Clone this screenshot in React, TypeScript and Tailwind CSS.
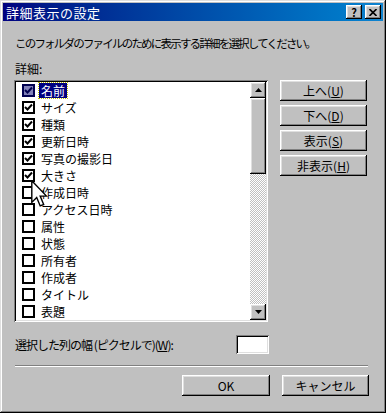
import React from "react";

const FONT = "font-['Noto_Sans_CJK_JP','Noto_Sans',sans-serif]";
const RAISED =
  "bg-[#c0c0c0] shadow-[inset_-1px_-1px_#000000,inset_1px_1px_#ffffff,inset_-2px_-2px_#808080,inset_2px_2px_#dfdfdf]";
const SUNKEN =
  "shadow-[inset_1px_1px_#808080,inset_-1px_-1px_#ffffff,inset_2px_2px_#000000,inset_-2px_-2px_#dfdfdf]";

const ITEMS = [
  { label: "名前", checked: true },
  { label: "サイズ", checked: true },
  { label: "種類", checked: true },
  { label: "更新日時", checked: true },
  { label: "写真の撮影日", checked: true },
  { label: "大きさ", checked: true },
  { label: "作成日時", checked: false },
  { label: "アクセス日時", checked: false },
  { label: "属性", checked: false },
  { label: "状態", checked: false },
  { label: "所有者", checked: false },
  { label: "作成者", checked: false },
  { label: "タイトル", checked: false },
  { label: "表題", checked: false },
];

function Check({ color }: { color: string }) {
  return (
    <svg width="9" height="9" viewBox="0 0 9 9" className="block">
      <path d="M1 4 L3.5 6.5 L8 1.5" fill="none" stroke={color} strokeWidth="2" />
    </svg>
  );
}

function Btn({ children, className = "" }: { children: React.ReactNode; className?: string }) {
  return (
    <div
      className={`${RAISED} h-[21px] w-[87px] flex items-center justify-center text-[12px] leading-none text-black ${className}`}
    >
      {children}
    </div>
  );
}

function Arrow({ up }: { up?: boolean }) {
  return (
    <div className={`${RAISED} w-[16px] h-[16px] flex items-center justify-center`}>
      <svg width="7" height="4" viewBox="0 0 7 4" className="block">
        <path d={up ? "M3.5 0 L7 4 L0 4 Z" : "M0 0 L7 0 L3.5 4 Z"} fill="#000" />
      </svg>
    </div>
  );
}

export default function App() {
  return (
    <div
      className={`${FONT} relative w-[386px] h-[413px] bg-[#c0c0c0] p-[3px] flex flex-col shadow-[inset_-1px_-1px_#000000,inset_1px_1px_#dfdfdf,inset_-2px_-2px_#808080,inset_2px_2px_#ffffff]`}
    >
      {/* Title bar */}
      <div className="h-[18px] flex items-center bg-linear-to-r from-[#000080] to-[#1084d0] pl-[3px] pr-[2px]">
        <span className="text-white text-[13px] leading-none tracking-[0.5px]">詳細表示の設定</span>
        <div className="ml-auto flex gap-[3px]">
          <div className={`${RAISED} w-[16px] h-[14px] flex items-center justify-center text-[11px] font-bold leading-none`}>
            ?
          </div>
          <div className={`${RAISED} w-[16px] h-[14px] flex items-center justify-center`}>
            <svg width="8" height="7" viewBox="0 0 8 7" className="block">
              <path d="M0.5 0 L7.5 7 M7.5 0 L0.5 7" stroke="#000" strokeWidth="1.6" />
            </svg>
          </div>
        </div>
      </div>

      {/* Body */}
      <div className="flex flex-col pl-[11px] pr-[14px] text-black">
        <div className="mt-[15px] text-[11.5px] leading-[14px] tracking-[-1.8px] pl-[1px] whitespace-nowrap">
          このフォルダのファイルのために表示する詳細を選択してください。
        </div>
        <div className="mt-[12px] text-[12px] leading-[14px] pl-[1px]">詳細:</div>

        <div className="mt-[4px] flex">
          {/* List box */}
          <div className={`${SUNKEN} w-[254px] h-[242px] bg-white p-[2px] flex`}>
            <div className="flex-1 flex flex-col">
              {ITEMS.map((it, i) => {
                const sel = i === 0;
                return (
                  <div key={it.label} className="h-[17px] flex items-center pl-[6px]">
                    <div
                      className={`w-[13px] h-[13px] border-2 flex items-center justify-center ${
                        sel ? "border-[#000050] bg-[#8080b8]" : "border-black bg-white"
                      }`}
                    >
                      {it.checked && <Check color={sel ? "#000050" : "#000"} />}
                    </div>
                    <span
                      className={`ml-[4px] h-[15px] px-[2px] flex items-center text-[12px] leading-none ${
                        sel ? "bg-[#000080] text-white outline outline-1 outline-dotted outline-[#c0c000]" : ""
                      }`}
                    >
                      {it.label}
                    </span>
                  </div>
                );
              })}
            </div>
            {/* Scrollbar */}
            <div className="w-[16px] flex flex-col">
              <Arrow up />
              <div className={`${RAISED} h-[76px]`} />
              <div className="flex-1 bg-[repeating-conic-gradient(#c0c0c0_0_25%,#ffffff_0_50%)] bg-size-[2px_2px]" />
              <Arrow />
            </div>
          </div>

          {/* Buttons */}
          <div className="ml-[12px] flex flex-col gap-[4px]">
            <Btn>
              上へ(<u>U</u>)
            </Btn>
            <Btn>
              下へ(<u>D</u>)
            </Btn>
            <Btn>
              表示(<u>S</u>)
            </Btn>
            <Btn>
              非表示(<u>H</u>)
            </Btn>
          </div>
        </div>

        <div className="mt-[13px] flex items-center">
          <span className="pl-[1px] text-[12px] leading-none tracking-[-1px] whitespace-nowrap">
            選択した列の幅 (ピクセルで)(<u>W</u>):
          </span>
          <div className={`${SUNKEN} ml-auto mr-[100px] w-[33px] h-[19px] bg-white`} />
        </div>

        <div className="mt-[11px] ml-[1px] mr-[1px] h-[2px] border-t border-t-[#808080] border-b border-b-white" />

        <div className="mt-[8px] flex justify-end gap-[12px]">
          <Btn className="w-[88px] shadow-[inset_-1px_-1px_#000000,inset_1px_1px_#000000,inset_-2px_-2px_#000000,inset_2px_2px_#ffffff,inset_-3px_-3px_#808080,inset_3px_3px_#dfdfdf]">
            OK
          </Btn>
          <Btn>キャンセル</Btn>
        </div>
      </div>

      {/* Mouse cursor */}
      <svg
        className="absolute left-[31px] top-[180px]"
        width="17"
        height="28"
        viewBox="0 0 12 20"
      >
        <path
          d="M0.5 0.5 L0.5 16 L4 12.5 L6.5 18.5 L9 17.5 L6.5 11.5 L11 11.5 Z"
          fill="#fff"
          stroke="#000"
          strokeWidth="1"
          strokeLinejoin="miter"
        />
      </svg>
    </div>
  );
}
